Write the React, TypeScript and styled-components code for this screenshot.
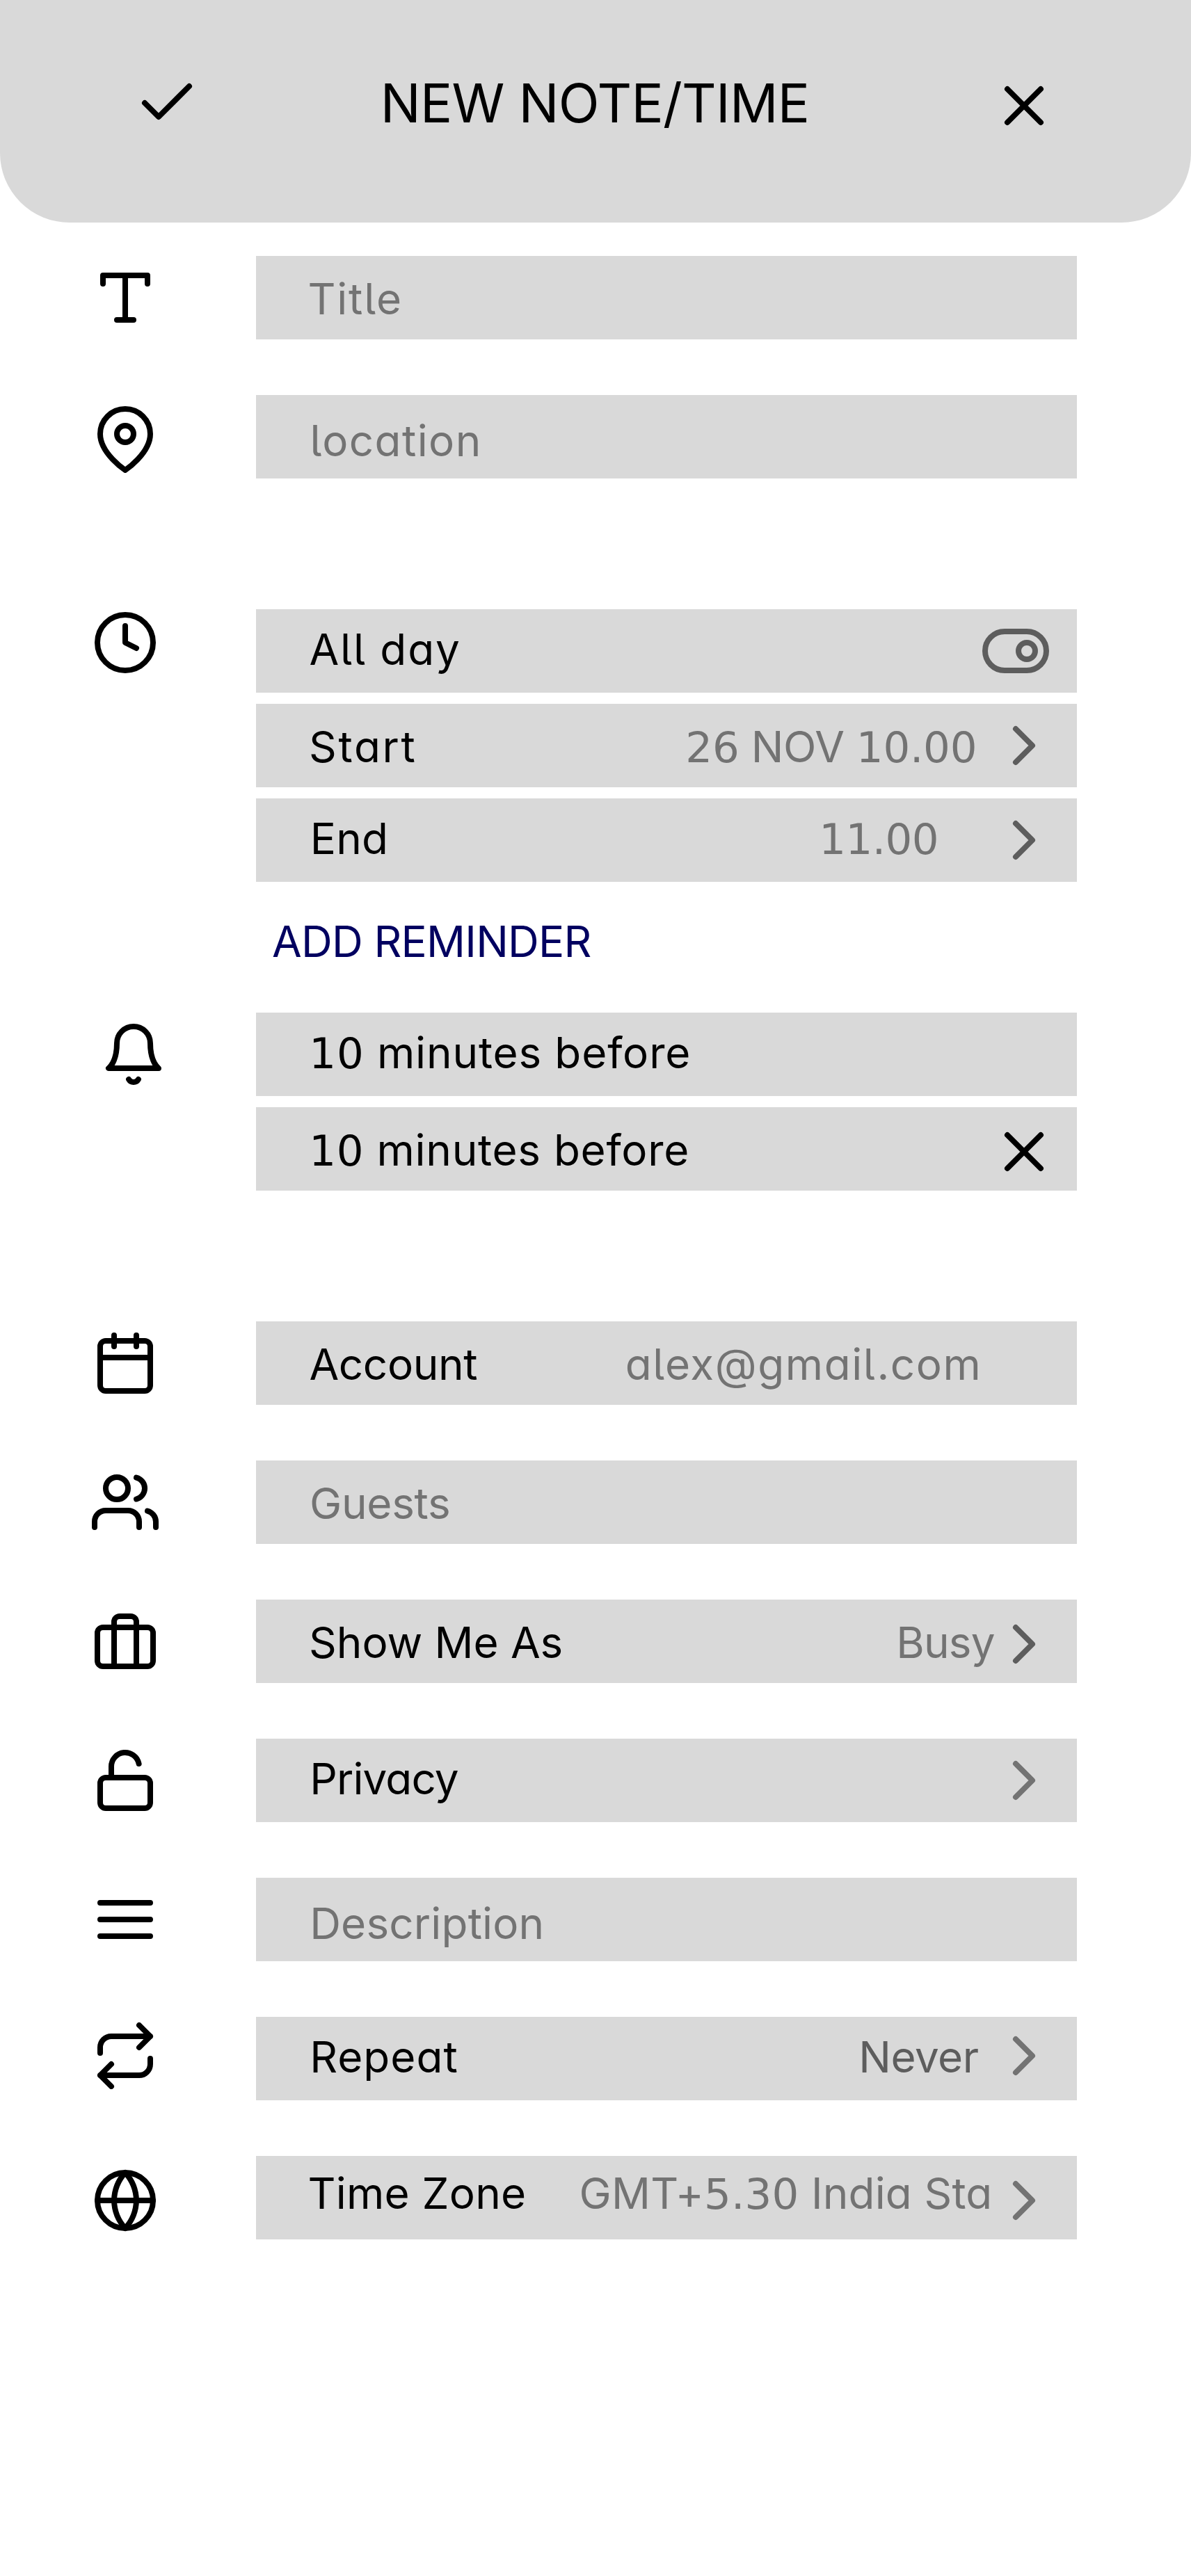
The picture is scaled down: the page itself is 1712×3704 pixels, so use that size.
import React from "react";
import styled, { createGlobalStyle } from "styled-components";

const ink = "#000000";
const muted = "#737373";
const dim = "#5d5d5d";
const panel = "#d9d9d9";

const GlobalStyle = createGlobalStyle`
  * { box-sizing: border-box; }
  body {
    margin: 0;
    background: #ffffff;
    font-family: Inter, "Noto Sans", sans-serif;
    font-feature-settings: "cv05", "cv11";
  }
`;

const Page = styled.main`
  display: flex;
  flex-direction: column;
  width: 1712px;
  height: 3704px;
  background: #ffffff;
`;

const Header = styled.header`
  display: flex;
  justify-content: space-between;
  align-items: flex-start;
  height: 320px;
  padding: 100px 192px 0;
  background: ${panel};
  border-radius: 0 0 100px 100px;
`;

const Heading = styled.h1`
  margin: 0 2px 0 0;
  font-size: 77px;
  line-height: 96px;
  font-weight: 400;
  letter-spacing: -0.77px;
  white-space: nowrap;
  color: ${ink};
`;

const Icon = styled.svg<{ $color?: string }>`
  display: block;
  flex: none;
  width: 96px;
  height: 96px;
  fill: none;
  stroke: ${(p) => p.$color ?? ink};
  stroke-width: 2;
  stroke-linecap: round;
  stroke-linejoin: round;
`;

const CloseSlot = styled.div`
  padding-top: 4px;
`;

const Form = styled.div`
  display: flex;
  flex-direction: column;
  gap: 188px;
  padding-top: 48px;
`;

const Group = styled.section`
  display: flex;
  flex-direction: column;
  gap: 80px;
`;

const Entry = styled.div`
  display: flex;
  align-items: flex-start;
`;

const Gutter = styled.div<{ $top: number; $left?: number }>`
  flex: none;
  width: 368px;
  padding: ${(p) => p.$top}px 0 0 ${(p) => p.$left ?? 132}px;
`;

const Stack = styled.div`
  display: flex;
  flex-direction: column;
  gap: 16px;
  width: 1180px;
`;

const Field = styled.div`
  display: flex;
  align-items: flex-start;
  width: 1180px;
  height: 120px;
  padding-right: 28px;
  background: ${panel};
`;

const Text = styled.span<{ $track: number }>`
  flex: none;
  height: 76px;
  font-size: 62px;
  line-height: 76px;
  letter-spacing: ${(p) => p.$track}px;
  white-space: pre;
`;

const Label = styled(Text)<{ $base: number; $inset: number; $muted?: boolean }>`
  margin: ${(p) => p.$base - 60}px 0 0 ${(p) => p.$inset}px;
  color: ${(p) => (p.$muted ? muted : ink)};
`;

const Value = styled(Text)<{ $base: number; $gap: number; $color?: string }>`
  margin: ${(p) => p.$base - 60}px ${(p) => p.$gap}px 0 auto;
  color: ${(p) => p.$color ?? muted};
`;

const Numerals = styled.span`
  font-family: "DejaVu Sans", sans-serif;
  font-size: 61px;
  line-height: 1;
`;

const Action = styled.div<{ $top: number; $right?: number }>`
  flex: none;
  margin: ${(p) => p.$top}px ${(p) => p.$right ?? 0}px 0 auto;
`;

const TrailingIcon = styled.div<{ $top: number }>`
  flex: none;
  margin-top: ${(p) => p.$top}px;
`;

const Reminder = styled.div`
  display: flex;
  flex-direction: column;
`;

const AddReminder = styled.button`
  display: block;
  align-self: flex-start;
  height: 188px;
  margin: 0 0 0 391px;
  padding: 48px 0 64px;
  border: 0;
  background: none;
  font: inherit;
  font-feature-settings: inherit;
  font-size: 62px;
  line-height: 76px;
  letter-spacing: -0.8px;
  white-space: nowrap;
  color: #010060;
`;

const Chevron = ({ color = dim }: { color?: string }) => (
  <Icon viewBox="0 0 24 24" $color={color}>
    <path d="M9 18l6-6-6-6" />
  </Icon>
);

const Cross = () => (
  <Icon viewBox="0 0 24 24">
    <path d="M18 6L6 18M6 6l12 12" />
  </Icon>
);

const Toggle = () => (
  <Icon viewBox="0 0 24 24" $color={dim}>
    <rect x="1" y="5" width="22" height="14" rx="7" />
    <circle cx="16" cy="12" r="3" />
  </Icon>
);

const icons = {
  type: <path d="M4 7V4h16v3M9 20h6M12 4v16" />,
  pin: (
    <>
      <path d="M21 10c0 7-9 13-9 13s-9-6-9-13a9 9 0 0 1 18 0z" />
      <circle cx="12" cy="10" r="3" />
    </>
  ),
  clock: (
    <>
      <circle cx="12" cy="12" r="10" />
      <path d="M12 6v6l4 2" />
    </>
  ),
  bell: <path d="M18 8A6 6 0 0 0 6 8c0 7-3 9-3 9h18s-3-2-3-9M13.73 21a2 2 0 0 1-3.46 0" />,
  calendar: (
    <>
      <rect x="3" y="4" width="18" height="18" rx="2" />
      <path d="M16 2v4M8 2v4M3 10h18" />
    </>
  ),
  users: (
    <>
      <path d="M17 21v-2a4 4 0 0 0-4-4H5a4 4 0 0 0-4 4v2M23 21v-2a4 4 0 0 0-3-3.87M16 3.13a4 4 0 0 1 0 7.75" />
      <circle cx="9" cy="7" r="4" />
    </>
  ),
  briefcase: (
    <>
      <rect x="2" y="7" width="20" height="14" rx="2" />
      <path d="M16 21V5a2 2 0 0 0-2-2h-4a2 2 0 0 0-2 2v16" />
    </>
  ),
  unlock: (
    <>
      <rect x="3" y="11" width="18" height="11" rx="2" />
      <path d="M7 11V7a5 5 0 0 1 9.9-1" />
    </>
  ),
  menu: <path d="M3 6h18M3 12h18M3 18h18" />,
  repeat: <path d="M17 1l4 4-4 4M3 11V9a4 4 0 0 1 4-4h14M7 23l-4-4 4-4M21 13v2a4 4 0 0 1-4 4H3" />,
  globe: (
    <>
      <circle cx="12" cy="12" r="10" />
      <path d="M2 12h20M12 2a15.3 15.3 0 0 1 4 10 15.3 15.3 0 0 1-4 10 15.3 15.3 0 0 1-4-10 15.3 15.3 0 0 1 4-10z" />
    </>
  ),
};

const Glyph = ({ name }: { name: keyof typeof icons }) => <Icon viewBox="0 0 24 24">{icons[name]}</Icon>;

/* Digits are set in a face whose "1" stands on a foot. */
const withNumerals = (text: string) =>
  text.split(/(\d[\d.]*)/).map((part, i) => (/\d/.test(part) ? <Numerals key={i}>{part}</Numerals> : part));

interface RowProps {
  label: string;
  base: number;
  inset: number;
  track: number;
  placeholder?: boolean;
  children?: React.ReactNode;
}

const Row = ({ label, base, inset, track, placeholder, children }: RowProps) => (
  <Field>
    <Label $base={base} $inset={inset} $track={track} $muted={placeholder}>
      {withNumerals(label)}
    </Label>
    {children}
  </Field>
);

export default function App() {
  return (
    <Page>
      <GlobalStyle />
      <Header>
        <Icon viewBox="0 0 24 24">
          <path d="M20 6L9 17l-5-5" />
        </Icon>
        <Heading>NEW NOTE/TIME</Heading>
        <CloseSlot>
          <Cross />
        </CloseSlot>
      </Header>

      <Form>
        <Group>
          <Entry>
            <Gutter $top={12}><Glyph name="type" /></Gutter>
            <Row label="Title" base={84} inset={74.5} track={1.78} placeholder />
          </Entry>
          <Entry>
            <Gutter $top={16}><Glyph name="pin" /></Gutter>
            <Row label="location" base={88} inset={77.6} track={1.41} placeholder />
          </Entry>
        </Group>

        <Reminder>
          <Entry>
            <Gutter $top={0}><Glyph name="clock" /></Gutter>
            <Stack>
              <Row label="All day" base={80} inset={76.4} track={1.89}>
                <Action $top={12} $right={12}><Toggle /></Action>
              </Row>
              <Row label="Start" base={84} inset={76.1} track={2.7}>
                <Value $base={84} $gap={19.8} $track={-0.26}>{withNumerals("26 NOV 10.00")}</Value>
                <TrailingIcon $top={12}><Chevron /></TrailingIcon>
              </Row>
              <Row label="End" base={80} inset={77.7} track={0.26}>
                <Value $base={80} $gap={75.1} $track={-0.61}>{withNumerals("11.00")}</Value>
                <TrailingIcon $top={12}><Chevron /></TrailingIcon>
              </Row>
            </Stack>
          </Entry>
          <AddReminder>ADD REMINDER</AddReminder>
          <Entry>
            <Gutter $top={12} $left={144}><Glyph name="bell" /></Gutter>
            <Stack>
              <Row label="10 minutes before" base={80} inset={76.3} track={0.85} />
              <Row label="10 minutes before" base={84} inset={76.3} track={0.72}>
                <Action $top={16}><Cross /></Action>
              </Row>
            </Stack>
          </Entry>
        </Reminder>

        <Group>
          <Entry>
            <Gutter $top={12}><Glyph name="calendar" /></Gutter>
            <Row label="Account" base={84} inset={76.4} track={-0.37}>
              <Value $base={84} $gap={108.5} $track={1.58}>alex@gmail.com</Value>
            </Row>
          </Entry>
          <Entry>
            <Gutter $top={12}><Glyph name="users" /></Gutter>
            <Row label="Guests" base={84} inset={77.1} track={-0.32} placeholder />
          </Entry>
          <Entry>
            <Gutter $top={12}><Glyph name="briefcase" /></Gutter>
            <Row label="Show Me As" base={84} inset={76.1} track={-0.06}>
              <Value $base={84} $gap={-5.7} $track={-0.81}>Busy</Value>
              <TrailingIcon $top={16}><Chevron /></TrailingIcon>
            </Row>
          </Entry>
          <Entry>
            <Gutter $top={12}><Glyph name="unlock" /></Gutter>
            <Row label="Privacy" base={80} inset={77.2} track={-0.85}>
              <Action $top={12}><Chevron color={muted} /></Action>
            </Row>
          </Entry>
          <Entry>
            <Gutter $top={12}><Glyph name="menu" /></Gutter>
            <Row label="Description" base={88} inset={77.2} track={0.16} placeholder />
          </Entry>
          <Entry>
            <Gutter $top={8}><Glyph name="repeat" /></Gutter>
            <Row label="Repeat" base={80} inset={77.2} track={1.0}>
              <Value $base={80} $gap={17.4} $track={-0.47} $color={dim}>Never</Value>
              <TrailingIcon $top={8}><Chevron color={muted} /></TrailingIcon>
            </Row>
          </Entry>
          <Entry>
            <Gutter $top={16}><Glyph name="globe" /></Gutter>
            <Row label="Time Zone" base={76} inset={74.5} track={0.23}>
              <Value $base={76} $gap={-2.4} $track={0.15}>{withNumerals("GMT+5.30 India Sta")}</Value>
              <TrailingIcon $top={16}><Chevron color={muted} /></TrailingIcon>
            </Row>
          </Entry>
        </Group>
      </Form>
    </Page>
  );
}
